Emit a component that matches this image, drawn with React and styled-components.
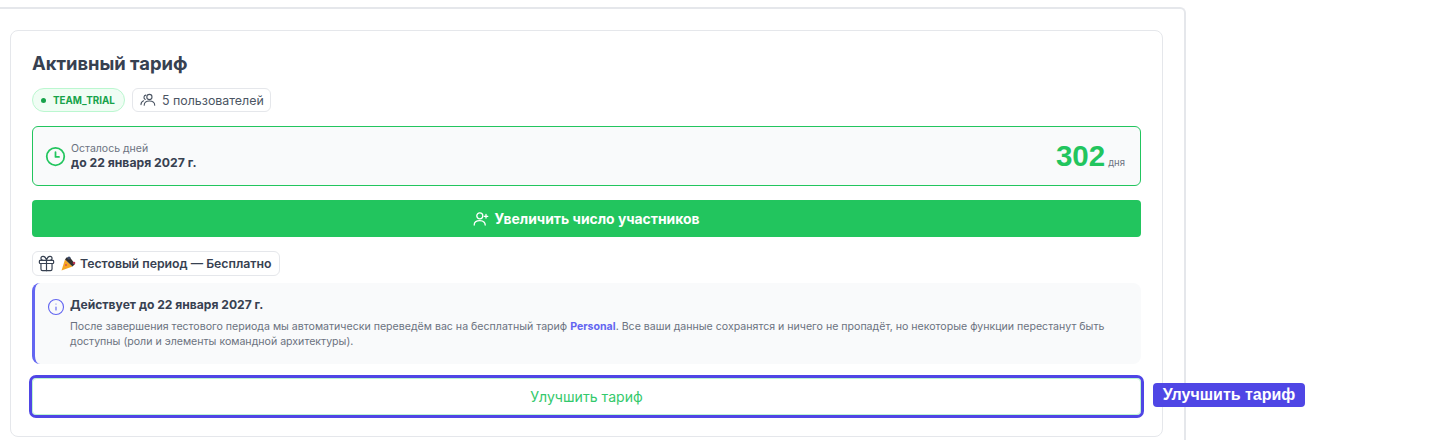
import React from "react"
import styled, { createGlobalStyle } from "styled-components"
import { Gift, Info as InfoIcon } from "lucide-react"

const Global = createGlobalStyle`
	html, body {
		margin: 0;
		height: 440px;
		overflow: hidden;
		background: #fff;
	}
	* {
		box-sizing: border-box;
	}
	body {
		font-family: Inter, "Noto Sans", sans-serif;
		color: #374151;
	}
`
const Page = styled.div`
	width: 1186px;
	height: 433px;
	margin-top: 7px;
	padding: 21px 21px 0 10px;
	border: 2px solid #e5e7eb;
	border-left: none;
	border-bottom: none;
	border-top-right-radius: 6px;
`
const Card = styled.section`
	width: 1153px;
	height: 407px;
	padding: 20px 21px;
	border: 1px solid #e5e7eb;
	border-radius: 8px;
	background: #fff;
	display: flex;
	flex-direction: column;
	align-items: stretch;
`
const Title = styled.h2`
	margin: 0;
	font-size: 18.4px;
	line-height: 24px;
	font-weight: 700;
	color: #374151;
`
const Tags = styled.div`
	display: flex;
	gap: 7px;
	margin-top: 13px;
`
const Pill = styled.span`
	display: inline-flex;
	align-items: center;
	height: 24px;
	border: 1px solid #e5e7eb;
	border-radius: 6px;
	background: #fff;
	font-size: 12.4px;
	color: #4b5563;
`
const PlanPill = styled(Pill)`
	width: 93px;
	padding-left: 8px;
	gap: 7px;
	border-color: #bbf7d0;
	border-radius: 12px;
	background: #f0fdf4;
	color: #16a34a;
	font-size: 9.8px;
	font-weight: 700;
`
const Dot = styled.i`
	width: 5px;
	height: 5px;
	border-radius: 50%;
	background: #16a34a;
`
const UsersPill = styled(Pill)`
	width: 139px;
	padding-left: 7px;
	gap: 6px;
`
const Remaining = styled.div`
	display: flex;
	align-items: center;
	justify-content: space-between;
	height: 60px;
	margin-top: 14px;
	padding: 0 15px 0 12px;
	border: 1px solid #22c55e;
	border-radius: 6px;
	background: #f9fafb;
`
const Left = styled.div`
	display: flex;
	align-items: center;
	gap: 5px;
`
const Caption = styled.div`
	font-size: 10.5px;
	line-height: 14px;
	color: #6b7280;
`
const Until = styled.div`
	font-size: 12.2px;
	line-height: 14px;
	font-weight: 700;
	color: #374151;
`
const Days = styled.div`
	display: flex;
	align-items: baseline;
	gap: 3px;
`
const Count = styled.span`
	font-family: "Liberation Sans", sans-serif;
	font-size: 29.5px;
	font-weight: 700;
	color: #22c55e;
`
const Unit = styled.span`
	font-size: 9.5px;
	color: #6b7280;
`
const Primary = styled.button`
	display: flex;
	align-items: center;
	justify-content: center;
	gap: 5px;
	height: 37px;
	margin-top: 14px;
	border: none;
	border-radius: 4px;
	background: #22c55e;
	color: #fff;
	font-family: inherit;
	font-size: 13.9px;
	font-weight: 700;
`
const TrialPill = styled(Pill)`
	align-self: flex-start;
	width: 248px;
	height: 25px;
	margin-top: 14px;
	padding-left: 4px;
	gap: 5px;
	font-size: 12.3px;
	font-weight: 600;
	color: #374151;
`
const Popper = styled.svg`
	flex: none;
	margin-right: -1px;
`
const Notice = styled.div`
	display: flex;
	gap: 5px;
	height: 81px;
	margin-top: 7px;
	padding: 14px 14px 0 12px;
	border-left: 3px solid #6366f1;
	border-radius: 8px;
	background: #f9fafb;
`
const NoticeIcon = styled(InfoIcon)`
	flex: none;
	margin-top: 1px;
`
const NoticeBody = styled.div`
	flex: 1;
`
const NoticeTitle = styled.div`
	font-size: 12.1px;
	line-height: 16px;
	font-weight: 700;
	color: #374151;
`
const NoticeText = styled.p`
	margin: 6px 0 0;
	font-size: 10.6px;
	line-height: 15px;
	color: #6b7280;
`
const Plan = styled.b`
	color: #6366f1;
`
const UpgradeWrap = styled.div`
	position: relative;
	margin-top: 14px;
`
const Upgrade = styled.button`
	display: block;
	width: 100%;
	height: 37px;
	border: 1px solid #bbf7d0;
	border-radius: 4px;
	outline: 3px solid #4f46e5;
	background: #fff;
	color: #34c96c;
	font-family: inherit;
	font-size: 14.1px;
`
const Tooltip = styled.span`
	position: absolute;
	left: 1121px;
	top: 5px;
	width: 152px;
	height: 24px;
	border-radius: 4px;
	background: #4f46e5;
	color: #fff;
	font-family: "Liberation Sans", sans-serif;
	font-size: 16px;
	font-weight: 700;
	line-height: 24px;
	text-align: center;
	white-space: nowrap;
`

function ClockIcon() {
	return (
		<svg width="21" height="21" viewBox="0 0 24 24" fill="none" stroke="#22c55e" strokeWidth="2">
			<circle cx="12" cy="12" r="10" />
			<path d="M12 7v5.5h4" strokeLinecap="round" strokeLinejoin="round" />
		</svg>
	)
}

function TeamIcon() {
	return (
		<svg width="16" height="16" viewBox="0 0 16 16" fill="none" stroke="#4b5563" strokeWidth="1.1" strokeLinecap="round">
			<circle cx="9.4" cy="5" r="2.6" />
			<path d="M4.2 13.2c0-2.7 2.2-4.2 5.2-4.2s5.3 1.500 5.300 4.200" />
			<path d="M5.800 3.100a2.300 2.300 0 0 0-.6 4.300" />
			<path d="M1 12.600c0-1.900 1-3.200 2.600-3.800" />
		</svg>
	)
}

function AddUserIcon() {
	return (
		<svg width="16" height="16" viewBox="0 0 16 16" fill="none" stroke="#fff" strokeWidth="1.3" strokeLinecap="round">
			<circle cx="6.800" cy="4.800" r="3" />
			<path d="M1.200 14c0-2.900 2.500-4.300 5.600-4.300 1.800 0 3.400.5 4.400 1.500 .6.600 1 1.600 1 2.800" />
			<path d="M13 3.500v3.600M11.200 5.300h3.600" />
		</svg>
	)
}

export default function App() {
	return (
		<Page>
			<Global />
			<Card>
				<Title>Активный тариф</Title>
				<Tags>
					<PlanPill>
						<Dot />
						TEAM_TRIAL
					</PlanPill>
					<UsersPill>
						<TeamIcon />5 пользователей
					</UsersPill>
				</Tags>
				<Remaining>
					<Left>
						<ClockIcon />
						<div>
							<Caption>Осталось дней</Caption>
							<Until>до 22 января 2027 г.</Until>
						</div>
					</Left>
					<Days>
						<Count>302</Count>
						<Unit>дня</Unit>
					</Days>
				</Remaining>
				<Primary>
					<AddUserIcon />
					Увеличить число участников
				</Primary>
				<TrialPill>
					<Gift size={19} strokeWidth={1.5} />
					<Popper width="15" height="15" viewBox="0 0 15 15">
						<path d="M0.5 14.500 L4 3.500 L11.500 10.500 Z" fill="#f5a623" />
						<path d="M4 3.500 L11.500 10.500 L14 8 L9 1.500 L5.500 1.500 Z" fill="#33302e" />
						<circle cx="8" cy="2" r="1.600" fill="#3b4a6b" />
						<circle cx="13" cy="7" r="1.300" fill="#b8324f" />
						<circle cx="5" cy="9" r="1" fill="#d9534f" />
					</Popper>
					Тестовый период — Бесплатно
				</TrialPill>
				<Notice>
					<NoticeIcon size={18} color="#6366f1" strokeWidth={1.5} />
					<NoticeBody>
						<NoticeTitle>Действует до 22 января 2027 г.</NoticeTitle>
						<NoticeText>
							После завершения тестового периода мы автоматически переведём вас на бесплатный тариф <Plan>Personal</Plan>.
							Все ваши данные сохранятся и ничего не пропадёт, но некоторые функции перестанут быть доступны (роли и
							элементы командной архитектуры).
						</NoticeText>
					</NoticeBody>
				</Notice>
				<UpgradeWrap>
					<Upgrade>Улучшить тариф</Upgrade>
					<Tooltip>Улучшить тариф</Tooltip>
				</UpgradeWrap>
			</Card>
		</Page>
	)
}
